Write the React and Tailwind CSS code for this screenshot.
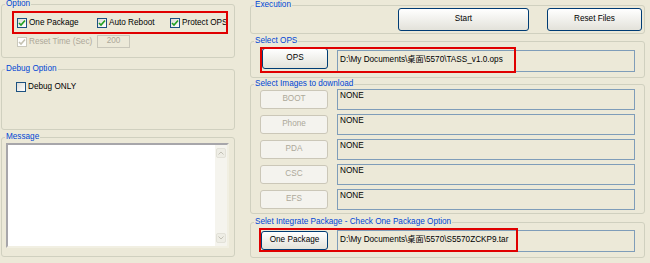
import React from "react";

const font = { fontFamily: '"Liberation Sans", Arial, "Noto Sans CJK SC", sans-serif' };

function GroupBox({ title, className, children }) {
  return (
    <fieldset className={"border border-[#D0D0BF] rounded-[3px] " + className}>
      <legend className="ml-[3px] px-[1px] leading-[8px] text-[8.2px] text-[#0046D5] whitespace-nowrap">{title}</legend>
      {children}
    </fieldset>
  );
}

function Check({ label, checked, disabled, className }) {
  return (
    <div className={"flex items-center gap-[2px] " + (className || "")}>
      <div
        className={
          "w-[10px] h-[10px] shrink-0 border flex items-center justify-center " +
          (disabled
            ? "border-[#CAC8BB] bg-white"
            : "border-[#1C5180] bg-gradient-to-br from-[#DCDCD7] to-white")
        }
      >
        {checked && (
          <svg width="8" height="8" viewBox="0 0 8 8">
            <path
              d="M1 4 L3 6 L7 1.5"
              fill="none"
              stroke={disabled ? "#C5C2B2" : "#21A121"}
              strokeWidth="1.6"
            />
          </svg>
        )}
      </div>
      <span
        className={
          "text-[8.2px] leading-[10px] whitespace-nowrap " + (disabled ? "text-[#ACA899]" : "text-black")
        }
      >
        {label}
      </span>
    </div>
  );
}

function XpButton({ children, disabled, className }) {
  return (
    <div
      className={
        "flex items-center justify-center rounded-[3px] border text-[8.2px] whitespace-nowrap " +
        (disabled
          ? "border-[#CBC7B8] bg-[#F4F3EE] text-[#ACA899]"
          : "border-[#003C74] bg-gradient-to-b from-white to-[#E3E2DA] text-black") +
        " " +
        className
      }
    >
      {children}
    </div>
  );
}

function Field({ text, className, textClass }) {
  return (
    <div className={"border border-[#7F9DB9] bg-[#ECE9D8] pl-[2px] text-[8.2px] text-black " + className}>
      <div className={"whitespace-nowrap " + textClass}>{text}</div>
    </div>
  );
}

const images = ["BOOT", "Phone", "PDA", "CSC", "EFS"];

export default function App() {
  return (
    <div style={font} className="relative w-[650px] h-[263px] bg-[#ECE9D8] flex overflow-hidden">
      {/* left column */}
      <div className="flex flex-col ml-[1px] w-[234px]">
        <GroupBox title="Option" className="h-[58px]">
          <div className="flex mt-[10px] ml-[15px]">
            <Check label="One Package" checked className="w-[80px]" />
            <Check label="Auto Reboot" checked className="w-[73px]" />
            <Check label="Protect OPS" checked />
          </div>
          <div className="flex items-center mt-[7px] ml-[15px]">
            <Check label="Reset Time (Sec)" checked disabled className="w-[80px]" />
            <div className="w-[33px] h-[13px] border border-[#C9C7BA] text-[8.2px] text-[#ACA899] flex items-center justify-center">
              200
            </div>
          </div>
        </GroupBox>

        <GroupBox title="Debug Option" className="h-[65px] mt-[7px]">
          <Check label="Debug ONLY" className="mt-[9px] ml-[14px]" />
        </GroupBox>

        <GroupBox title="Message" className="h-[124px] mt-[3px]">
          <div className="mt-[2px] ml-[4px] w-[223px] h-[105px] bg-white border-2 border-t-[#A7A6AA] border-l-[#A7A6AA] border-r-[#F1EFE2] border-b-[#F1EFE2] flex justify-end">
            <div className="w-[12px] h-full bg-[#F5F4EE] flex flex-col justify-between py-[3px]">
              <div className="h-[10px] mx-[1px] bg-[#EEEDE5] border border-[#E2E1D8] rounded-[2px] flex items-center justify-center">
                <svg width="6" height="4" viewBox="0 0 6 4">
                  <path d="M0.5 3.5 L3 1 L5.5 3.5" fill="none" stroke="#C2C0B5" strokeWidth="1" />
                </svg>
              </div>
              <div className="h-[10px] mx-[1px] bg-[#EEEDE5] border border-[#E2E1D8] rounded-[2px] flex items-center justify-center">
                <svg width="6" height="4" viewBox="0 0 6 4">
                  <path d="M0.5 0.5 L3 3 L5.5 0.5" fill="none" stroke="#C2C0B5" strokeWidth="1" />
                </svg>
              </div>
            </div>
          </div>
        </GroupBox>
      </div>

      {/* right column */}
      <div className="flex flex-col ml-[15px] w-[395px]">
        <GroupBox title="Execution" className="h-[33px] mt-[1px]">
          <div className="flex -mt-[1px] ml-[147px]">
            <XpButton className="w-[131px] h-[23px]">Start</XpButton>
            <XpButton className="w-[95px] h-[23px] ml-[18px]">Reset Files</XpButton>
          </div>
        </GroupBox>

        <GroupBox title="Select OPS" className="h-[41px] mt-[3px]">
          <div className="flex items-start ml-[11px]">
            <XpButton className="w-[66px] h-[21px] mt-[3px]">OPS</XpButton>
            <Field
              text={"D:\\My Documents\\桌面\\5570\\TASS_v1.0.ops"}
              className="w-[298px] h-[22px] mt-[5px] ml-[9px]"
              textClass="mt-[3px] leading-[12px]"
            />
          </div>
        </GroupBox>

        <GroupBox title="Select Images to download" className="h-[134px] mt-[2px]">
          <div className="flex flex-col gap-[4px] mt-[1px] ml-[9px]">
            {images.map((name) => (
              <div key={name} className="flex items-start">
                <XpButton disabled className="w-[68px] h-[19px] mt-[1px]">
                  {name}
                </XpButton>
                <Field text="NONE" className="w-[298px] h-[21px] ml-[9px]" textClass="mt-[1px] leading-[10px]" />
              </div>
            ))}
          </div>
        </GroupBox>

        <GroupBox title="Selet Integrate Package - Check One Package Option" className="h-[40px] mt-[4px]">
          <div className="flex items-start ml-[10px]">
            <XpButton className="w-[67px] h-[19px] mt-[5px]">One Package</XpButton>
            <Field
              text={"D:\\My Documents\\桌面\\5570\\S5570ZCKP9.tar"}
              className="w-[298px] h-[22px] mt-[4px] ml-[9px]"
              textClass="mt-[3px] leading-[12px]"
            />
          </div>
        </GroupBox>
      </div>

      {/* red highlight boxes */}
      <div className="absolute left-[12px] top-[11px] w-[216px] h-[23px] border-2 border-[#E00000]" />
      <div className="absolute left-[260px] top-[47px] w-[256px] h-[26px] border-2 border-[#E00000]" />
      <div className="absolute left-[259px] top-[228px] w-[259px] h-[24px] border-2 border-[#E00000]" />
    </div>
  );
}
